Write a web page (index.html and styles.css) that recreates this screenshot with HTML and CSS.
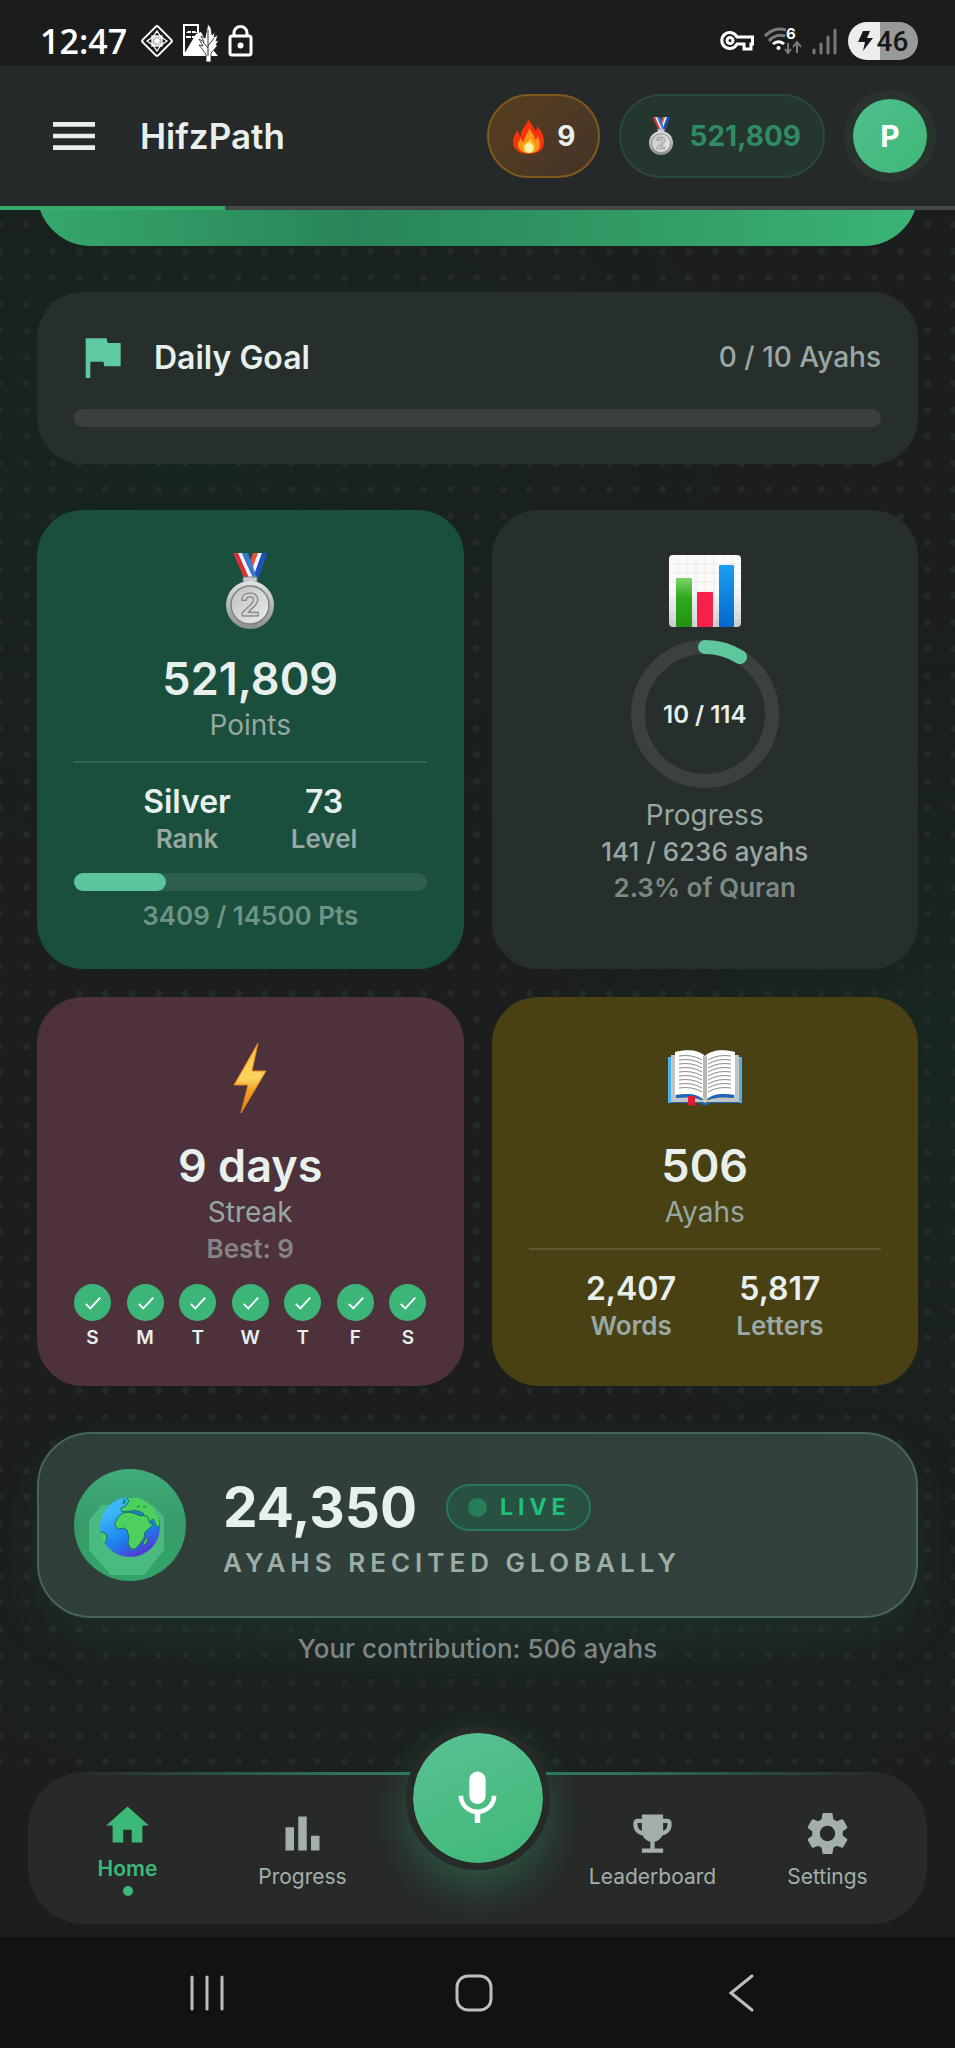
FILE: index.html
```html
<!DOCTYPE html>
<html lang="en">
<head>
  <meta charset="UTF-8">
  <meta name="viewport" content="width=device-width, initial-scale=1.0">
  <title>HifzPath</title>
  <link rel="stylesheet" href="styles.css">
</head>
<body>
  <!-- shared shapes -->
  <svg class="sprite" aria-hidden="true">
    <defs>
      <linearGradient id="silver" x1="0" y1="0" x2="0" y2="1">
        <stop offset="0" stop-color="#e2e3e3"/><stop offset="1" stop-color="#8b8d8e"/>
      </linearGradient>
      <linearGradient id="silver-in" x1="0" y1="0" x2="1" y2="1">
        <stop offset="0" stop-color="#bfc1c1"/><stop offset="1" stop-color="#ececec"/>
      </linearGradient>
      <symbol id="medal" viewBox="0 0 48 76">
        <path d="M27 0h14L32 25h-9z" fill="#3d8fc9"/>
        <path d="M27 0h5l-8 22-3-6z" fill="#e5533d"/>
        <path d="M32 0h4L27 25h-4z" fill="#f4f4f6"/>
        <path d="M36 0h5L32 25h-5z" fill="#1f4fc0"/>
        <path d="M7 0h5l11 25h-5z" fill="#dc2f3c"/>
        <path d="M12 0h4l11 25h-4z" fill="#f4f4f6"/>
        <path d="M16 0h6l9 25h-4z" fill="#3579d3"/>
        <rect x="17" y="24" width="14" height="5" rx="1" fill="#c9cccc" stroke="#7d8081"/>
        <circle cx="24" cy="52" r="24" fill="url(#silver)"/>
        <circle cx="24" cy="52" r="19" fill="url(#silver-in)" stroke="#7f8283" stroke-width="1.5"/>
        <text x="24" y="63" text-anchor="middle" class="medal-num">2</text>
      </symbol>
      <symbol id="check" viewBox="0 0 20 20">
        <path d="M2 11l5 5L18 4" fill="none" stroke="#fff" stroke-width="2"/>
      </symbol>
    </defs>
  </svg>

  <div class="status-bar">
    <span class="clock">12:47</span>
    <svg width="34" height="34" viewBox="0 0 34 34" fill="none" stroke="#fff" stroke-width="2">
      <rect x="6" y="6" width="22" height="22" rx="2" transform="rotate(45 17 17)"/>
      <path d="M17 7l4 6h-8zM17 27l4-6h-8zM7 17l6-4v8zM27 17l-6-4v8z" stroke-width="1.3"/>
      <rect x="12" y="12" width="10" height="10" stroke-width="1.3"/>
      <circle cx="17" cy="17" r="3" fill="#fff" stroke="none"/>
      <path d="M12 12l10 10M22 12L12 22" stroke-width="1"/>
    </svg>
    <svg width="36" height="38" viewBox="0 0 36 38" fill="#fff">
      <path d="M1 31V1h14v8" fill="none" stroke="#fff" stroke-width="2"/>
      <path d="M3 9l2-2h3v2zM9 9V7h3l2 2zM3 12h5v2H3zM9 12h5v2H9z"/>
      <path d="M0 32L13 10l5-2 5 9 12 15z"/>
      <path d="M25 0l3 4 1 7 3-3-1 5 4-2-2 6 3-1-3 5 2 0-5 6-2 2v9h-5v-8l-3-4-4-5 4 1-4-7 5 3-3-6 4 2z" stroke="#1a1d1c" stroke-width=".8"/>
      <path d="M25 6v26M20 18l5 6M31 14l-6 8" stroke="#1a1d1c" stroke-width=".9" fill="none"/>
    </svg>
    <svg width="26" height="34" viewBox="0 0 26 34">
      <rect x="2" y="12" width="21" height="19" rx="2" fill="none" stroke="#fff" stroke-width="3"/>
      <path d="M6 12V9a6.500 6.500 0 0113 0v3" fill="none" stroke="#fff" stroke-width="3"/>
      <circle cx="12.500" cy="21.500" r="3" fill="#fff"/>
    </svg>
    <div class="status-right">
      <svg width="34" height="22" viewBox="0 0 34 22" fill="none" stroke="#fff" stroke-width="3">
        <path d="M17 7h15.500v7H31v5h-7v-5h-7a8 8 0 110-7z"/>
        <circle cx="10" cy="10.500" r="3"/>
      </svg>
      <svg width="38" height="36" viewBox="0 0 38 36" fill="none">
        <path d="M1 13a20 20 0 0121-6M5 18a14 14 0 0116-5" stroke="#7b7d7c" stroke-width="3"/>
        <path d="M9 21a8 8 0 0111 0" stroke="#fff" stroke-width="3"/>
        <circle cx="14.500" cy="25" r="2" fill="#fff"/>
        <path d="M24 20v10m-3-4l3 4 3-4M33 30V19m-4 5l4-5 4 5" stroke="#7b7d7c" stroke-width="2"/>
        <text x="22" y="16" class="wifi-num">6</text>
      </svg>
      <svg width="26" height="28" viewBox="0 0 26 28" stroke="#777978" stroke-width="3" stroke-linecap="round">
        <path d="M2 26v-3M9 26v-9M16 26V10M23 26V3"/>
      </svg>
      <div class="battery">
        <svg width="15" height="20" viewBox="0 0 15 20"><path d="M5 0h7L9 7h6L5 20l2-9H0z" fill="#171918"/></svg>
        <span>46</span>
      </div>
    </div>
  </div>

  <header class="app-bar">
    <button class="icon-button" aria-label="Menu">
      <svg width="56" height="56" viewBox="0 0 24 24" fill="#e8f0ed"><path d="M3 18h18v-2H3v2zm0-5h18v-2H3v2zm0-7v2h18V6H3z"/></svg>
    </button>
    <h1 class="app-title">HifzPath</h1>
    <div class="pill pill-streak">
      <svg width="32" height="36" viewBox="0 0 32 36">
        <path d="M15 0c1 5 6 7 7 13 2-1 2-3 2-5 5 5 7 10 7 16 0 8-6 12-15 12S0 32 0 24c0-5 2-8 5-12 0 3 1 5 3 6C7 10 15 8 15 0z" fill="#f5330f"/>
        <path d="M16 8c1 6 6 8 6 14 2-1 2-2 2-4 3 4 3 7 3 9 0 5-4 8-11 8S5 32 5 27c0-3 1-5 3-7 0 2 1 3 3 4 0-7 6-9 5-16z" fill="#fb9419"/>
        <path d="M17 20c1 4 5 5 5 9s-3 6-6 6-6-2-6-6c0-4 6-4 7-9z" fill="#fdca3c"/>
        <ellipse cx="16" cy="30" rx="4" ry="5" fill="#fff4b0"/>
      </svg>
      <span>9</span>
    </div>
    <div class="pill pill-points">
      <svg width="24" height="38"><use href="#medal"/></svg>
      <span>521,809</span>
    </div>
    <button class="avatar">P</button>
  </header>
  <div class="page-progress"><div class="page-progress-fill" style="width: 23.6%"></div></div>

  <main class="content">
    <div class="banner"><div class="banner-card"></div></div>

    <section class="card goal">
      <div class="goal-head">
        <svg width="56" height="56" viewBox="0 0 24 24" fill="#5fc9a0"><path d="M14.400 6L14 4H5v17h2v-7h5.600l.4 2h7V6z"/></svg>
        <h2>Daily Goal</h2>
        <span>0 / 10 Ayahs</span>
      </div>
      <div class="track"></div>
    </section>

    <div class="stats">
      <section class="card stat points">
        <div class="emoji"><svg width="48" height="76"><use href="#medal"/></svg></div>
        <div class="value">521,809</div>
        <div class="label">Points</div>
        <div class="pair">
          <div><strong>Silver</strong><span>Rank</span></div>
          <div><strong>73</strong><span>Level</span></div>
        </div>
        <div class="track level"><div class="fill" style="width: 26%"></div></div>
        <div class="note">3409 / 14500 Pts</div>
      </section>

      <section class="card stat">
        <div class="emoji">
          <svg width="72" height="72" viewBox="0 0 72 72">
            <defs>
              <linearGradient id="paper" x1="0" y1="0" x2="0" y2="1"><stop offset=".5" stop-color="#fafafa"/><stop offset="1" stop-color="#c9c9cb"/></linearGradient>
              <linearGradient id="bar-g" x1="0" y1="0" x2="0" y2="1"><stop offset="0" stop-color="#7bd66b"/><stop offset=".4" stop-color="#30a81c"/><stop offset="1" stop-color="#219414"/></linearGradient>
              <linearGradient id="bar-b" x1="0" y1="0" x2="0" y2="1"><stop offset="0" stop-color="#1b9ef0"/><stop offset="1" stop-color="#0468cf"/></linearGradient>
            </defs>
            <rect width="72" height="72" rx="4" fill="url(#paper)"/>
            <path d="M0 9h72M0 18h72M0 27h72M0 36h72M0 45h72M0 54h72M0 63h72M9 0v72M18 0v72M27 0v72M36 0v72M45 0v72M54 0v72M63 0v72" stroke="#e8ebe9"/>
            <rect x="7" y="23" width="16" height="49" rx="1" fill="url(#bar-g)"/>
            <rect x="28" y="37" width="16" height="35" rx="1" fill="#f5204b"/>
            <rect x="50" y="10" width="15" height="62" rx="1" fill="url(#bar-b)"/>
          </svg>
        </div>
        <div class="ring">
          <svg viewBox="0 0 148 148">
            <circle cx="74" cy="74" r="67" fill="none" stroke="#3b413f" stroke-width="14"/>
            <path d="M74 7A67 67 0 01109 17" fill="none" stroke="#5ec79c" stroke-width="14" stroke-linecap="round"/>
          </svg>
          <span>10 / 114</span>
        </div>
        <div class="label ring-label">Progress</div>
        <div class="sub">141 / 6236 ayahs</div>
        <div class="note">2.3% of Quran</div>
      </section>

      <section class="card stat streak">
        <div class="emoji">
          <svg width="34" height="72" viewBox="0 0 34 72">
            <defs><linearGradient id="bolt" x1="0" y1="0" x2="0" y2="1"><stop offset="0" stop-color="#fcc04a"/><stop offset=".5" stop-color="#fdd45e"/><stop offset=".7" stop-color="#f49a27"/><stop offset="1" stop-color="#ef7d13"/></linearGradient></defs>
            <path d="M25 1L1 43h14L8 71l25-42H19z" fill="url(#bolt)" stroke="#e08718" stroke-width="1"/>
          </svg>
        </div>
        <div class="value">9 days</div>
        <div class="label">Streak</div>
        <div class="sub best">Best: 9</div>
        <ul class="week">
          <li><svg width="37" height="37"><use href="#check" x="10" y="10" width="18" height="18"/></svg>S</li>
          <li><svg width="37" height="37"><use href="#check" x="10" y="10" width="18" height="18"/></svg>M</li>
          <li><svg width="37" height="37"><use href="#check" x="10" y="10" width="18" height="18"/></svg>T</li>
          <li><svg width="37" height="37"><use href="#check" x="10" y="10" width="18" height="18"/></svg>W</li>
          <li><svg width="37" height="37"><use href="#check" x="10" y="10" width="18" height="18"/></svg>T</li>
          <li><svg width="37" height="37"><use href="#check" x="10" y="10" width="18" height="18"/></svg>F</li>
          <li><svg width="37" height="37"><use href="#check" x="10" y="10" width="18" height="18"/></svg>S</li>
        </ul>
      </section>

      <section class="card stat ayahs">
        <div class="emoji">
          <svg width="76" height="56" viewBox="0 0 76 56">
            <path d="M1 7h74v46H43c-2 3-8 3-10 0H1z" fill="#1d66b8"/>
            <path d="M1 7h3v46H1zM72 7h3v46h-3z" fill="#46b4f2"/>
            <path d="M4 5h5v43c11-1 22-1 28 4H4z" fill="#c4c4c4"/>
            <path d="M72 5h-5v43c-11-1-22-1-28 4h33z" fill="#c4c4c4"/>
            <path d="M8 2C20-1 32 0 38 6v45C31 43 20 43 8 45z" fill="#fff"/>
            <path d="M68 2C56-1 44 0 38 6v45c7-8 18-8 30-6z" fill="#fff"/>
            <path d="M36 5l2 2 2-2v43l-2 3-2-3z" fill="#b7b7b7"/>
            <path d="M12 6q13-2 23 4M12 10q13-2 23 4M12 14q13-2 23 4M12 18q13-2 23 4M12 22q13-2 23 4M12 26q13-2 23 4M12 30q13-2 23 4M12 34q13-2 23 4M12 38q13-2 23 4M64 6q-13-2-23 4M64 10q-13-2-23 4M64 14q-13-2-23 4M64 18q-13-2-23 4M64 22q-13-2-23 4M64 26q-13-2-23 4M64 30q-13-2-23 4M64 34q-13-2-23 4M64 38q-13-2-23 4" fill="none" stroke="#85898a" stroke-width="1"/>
            <path d="M21 46h7v10l-4-1-3 1z" fill="#e31b36"/>
            <path d="M34 50h8l-4 3z" fill="#e6d68a"/>
          </svg>
        </div>
        <div class="value">506</div>
        <div class="label">Ayahs</div>
        <div class="pair">
          <div><strong>2,407</strong><span>Words</span></div>
          <div><strong>5,817</strong><span>Letters</span></div>
        </div>
      </section>
    </div>

    <section class="card global">
      <svg class="globe" viewBox="0 0 112 112">
        <defs>
          <linearGradient id="disc" x1="0" y1="0" x2="0" y2="1"><stop offset="0" stop-color="#41ac7b"/><stop offset=".5" stop-color="#369b6a"/><stop offset="1" stop-color="#33a469"/></linearGradient>
          <linearGradient id="sea" x1=".2" y1="0" x2=".7" y2="1"><stop offset=".2" stop-color="#3cb6fc"/><stop offset=".65" stop-color="#1a80ec"/><stop offset="1" stop-color="#5b32cf"/></linearGradient>
          <clipPath id="disc-clip"><circle cx="56" cy="56" r="56"/></clipPath>
          <clipPath id="earth-clip"><circle cx="56" cy="58" r="30"/></clipPath>
        </defs>
        <circle cx="56" cy="56" r="56" fill="url(#disc)"/>
        <path d="M15 52l12-16h52l11 12v33l-20 25H37L15 81z" fill="#49ba80" clip-path="url(#disc-clip)"/>
        <circle cx="56" cy="58" r="30" fill="url(#sea)"/>
        <g clip-path="url(#earth-clip)" fill="#4dd05e" stroke="#1c6f66" stroke-width="1">
          <path d="M47 39l5-2 3-5-3-4h14l12 7 7 12 1 10-3 1-4-8-4 3-4-6-6-1-6-3-5-1-6 1z"/>
          <path d="M41 54l3-6 5-4 8-1 8 3 8 1 3 7 3 1-3 4-5 4-1 6-5 7-4 4-4 0-3-5 1-7-2-7-3-2-5 1-4-3z"/>
          <path d="M25 62l7 3 1 5-3 6-6-7zM73 68l1 3-3 5-2-2z"/>
          <path d="M56 43l3-2 4 1 4 1 3 2-3 2-5-2zM63 38l3-1M69 38h3" fill="#1f7fd0"/>
          <path d="M50 30l2 3-3 2z"/>
        </g>
      </svg>
      <div class="global-text">
        <div class="global-row">
          <span class="global-count">24,350</span>
          <span class="live"><i></i>LIVE</span>
        </div>
        <div class="global-label">AYAHS RECITED GLOBALLY</div>
      </div>
    </section>
    <p class="contribution">Your contribution: 506 ayahs</p>
  </main>

  <nav class="tab-bar">
    <a class="tab active" href="#home">
      <svg viewBox="0 0 24 24"><path d="M10 20v-6h4v6h5v-8h3L12 3 2 12h3v8z"/></svg>
      Home
    </a>
    <a class="tab" href="#progress">
      <svg viewBox="0 0 24 24"><path d="M4 9h4v11H4zM16 13h4v7h-4zM10 4h4v16h-4z"/></svg>
      Progress
    </a>
    <button class="fab" aria-label="Recite">
      <svg width="65" height="65" viewBox="0 0 24 24" fill="#fff"><path d="M12 14c1.660 0 2.990-1.340 2.990-3L15 5c0-1.660-1.340-3-3-3S9 3.340 9 5v6c0 1.660 1.340 3 3 3zm5.300-3c0 3-2.540 5.100-5.300 5.100S6.700 14 6.700 11H5c0 3.410 2.720 6.230 6 6.720V21h2v-3.280c3.280-.48 6-3.300 6-6.720h-1.700z"/></svg>
    </button>
    <a class="tab" href="#leaderboard">
      <svg viewBox="0 0 24 24"><path d="M19 5h-2V3H7v2H5c-1.100 0-2 .9-2 2v1c0 2.550 1.920 4.630 4.390 4.940.63 1.500 1.980 2.630 3.610 2.960V19H7v2h10v-2h-4v-3.100c1.630-.33 2.980-1.460 3.610-2.960C19.080 12.630 21 10.550 21 8V7c0-1.100-.9-2-2-2zM5 8V7h2v3.820C5.840 10.400 5 9.300 5 8zm14 0c0 1.300-.84 2.400-2 2.820V7h2v1z"/></svg>
      Leaderboard
    </a>
    <a class="tab" href="#settings">
      <svg viewBox="0 0 24 24"><path d="M19.140 12.940c.04-.3.060-.61.060-.94 0-.32-.02-.64-.07-.94l2.030-1.580c.18-.14.23-.41.12-.61l-1.920-3.320c-.12-.22-.37-.29-.59-.22l-2.390.96c-.5-.38-1.030-.7-1.620-.94l-.36-2.540c-.04-.24-.24-.41-.48-.41h-3.840c-.24 0-.43.17-.47.41l-.36 2.540c-.59.24-1.130.57-1.620.94l-2.390-.96c-.22-.08-.47 0-.59.22L2.740 8.870c-.12.21-.08.47.12.61l2.030 1.580c-.05.3-.09.63-.09.94s.02.64.07.94l-2.030 1.580c-.18.14-.23.41-.12.61l1.920 3.320c.12.22.37.29.59.22l2.390-.96c.5.38 1.030.7 1.620.94l.36 2.540c.05.24.24.41.48.41h3.840c.24 0 .44-.17.47-.41l.36-2.540c.59-.24 1.130-.56 1.620-.94l2.390.96c.22.08.47 0 .59-.22l1.920-3.320c.12-.22.07-.47-.12-.61l-2.010-1.580zM12 15.600c-1.980 0-3.600-1.620-3.600-3.600s1.620-3.600 3.600-3.600 3.600 1.620 3.600 3.600-1.620 3.600-3.600 3.600z"/></svg>
      Settings
    </a>
  </nav>

  <div class="system-nav">
    <button aria-label="Recent apps"><svg width="38" height="40" viewBox="0 0 38 40"><path d="M4 4v32M19 4v32M34 4v32"/></svg></button>
    <button aria-label="Home screen"><svg width="40" height="40" viewBox="0 0 40 40"><rect x="3" y="3" width="34" height="34" rx="11"/></svg></button>
    <button aria-label="Back"><svg width="40" height="40" viewBox="0 0 40 40"><path d="M31 3L10 20l21 17"/></svg></button>
  </div>
</body>
</html>
```
FILE: styles.css
```css
* {
  box-sizing: border-box;
}

body {
  margin: 0;
  min-height: 100vh;
  display: flex;
  flex-direction: column;
  font-family: Inter, "Noto Sans", sans-serif;
  color: #e8f0ed;
  background-color: #1b1e1d;
  background-image:
    radial-gradient(ellipse 560px 460px at 20% 430px, rgba(10, 56, 32, 0.3), transparent),
    radial-gradient(ellipse 420px 460px at 100% 1060px, rgba(14, 60, 42, 0.28), transparent),
    radial-gradient(ellipse 600px 220px at 50% 1620px, rgba(30, 70, 55, 0.2), transparent);
}

h1, h2, p, ul {
  margin: 0;
  padding: 0;
}

button {
  border: none;
  padding: 0;
  background: none;
  color: inherit;
  font-family: inherit;
  cursor: pointer;
}

svg {
  display: block;
  flex-shrink: 0;
}

.sprite {
  position: absolute;
  width: 0;
  height: 0;
}

.medal-num {
  font-size: 31px;
  font-weight: 700;
  fill: #d2d4d4;
  stroke: #777a7b;
  stroke-width: 1px;
}

/* phone status bar */
.status-bar {
  height: 66px;
  padding: 16px 37px 0 40px;
  display: flex;
  align-items: flex-start;
  gap: 9px;
  background: #1a1d1c;
}

.status-bar > svg {
  margin-top: 8px;
}

.clock {
  font-family: "Open Sans", sans-serif;
  font-size: 34px;
  line-height: 50px;
  font-weight: 600;
  color: #fff;
  margin-right: 4px;
}

.status-right {
  margin-left: auto;
  margin-top: 6px;
  display: flex;
  align-items: center;
  gap: 10px;
}

.wifi-num {
  font-size: 15px;
  font-weight: 700;
  fill: #fff;
}

.battery {
  display: flex;
  align-items: center;
  justify-content: center;
  gap: 4px;
  width: 70px;
  height: 38px;
  border-radius: 19px;
  background: linear-gradient(90deg, #eceeed 46%, #989a99 46%);
  color: #171918;
  font-family: Roboto, sans-serif;
  font-size: 28px;
  font-weight: 500;
}

/* app bar */
.app-bar {
  display: flex;
  align-items: center;
  padding: 28px 28px 28px 46px;
  background: #262929;
}

.app-title {
  margin: 0 auto 0 38px;
  font-size: 35px;
  font-weight: 600;
}

.pill {
  display: flex;
  align-items: center;
  gap: 12px;
  height: 84px;
  padding: 0 22px 0 24px;
  border: 2px solid;
  border-radius: 42px;
  font-size: 28px;
  font-weight: 700;
}

.pill-streak {
  margin-right: 19px;
  background: linear-gradient(135deg, #563f1d, #463329);
  border-color: #80591f;
}

.pill-points {
  gap: 17px;
  margin-right: 28px;
  padding-left: 28px;
  background: #25362f;
  border-color: #264a3c;
  color: #2f8c62;
}

.avatar {
  width: 74px;
  height: 74px;
  border-radius: 50%;
  background: linear-gradient(135deg, #50bf8e, #3fb878);
  box-shadow: 0 0 0 9px #2a322e;
  color: #fff;
  font-size: 30px;
  font-weight: 700;
}

.page-progress {
  height: 4px;
  background: #434745;
}

.page-progress-fill {
  height: 100%;
  background: #35ad6d;
}

/* page content over the dotted pattern */
.content {
  flex: 1;
  display: flex;
  flex-direction: column;
  gap: 46px;
  padding: 0 37px 106px;
  background-image:
    radial-gradient(circle, #232a27 3px, transparent 4px),
    radial-gradient(circle, #232a27 3px, transparent 4px),
    radial-gradient(circle, #232a27 3px, transparent 4px),
    radial-gradient(circle, #232a27 3px, transparent 4px);
  background-size: 53px 53px;
  background-position: 26px 41px, 53px 41px, 26px 15px, 53px 15px;
}

.banner {
  display: flex;
  align-items: flex-end;
  height: 36px;
  overflow: hidden;
}

.banner-card {
  flex: 1;
  height: 120px;
  border-radius: 54px;
  background: linear-gradient(90deg, #35a76c, #298559 36%, #2f9562 60%, #3bb475);
}

.card {
  padding: 37px;
  border-radius: 46px;
  background: #272f2c;
}

.goal-head {
  display: flex;
  align-items: center;
  gap: 24px;
  margin-bottom: 24px;
}

.goal-head h2 {
  font-size: 32px;
  font-weight: 600;
}

.goal-head span {
  margin-left: auto;
  font-size: 28px;
  font-weight: 500;
  color: #9ba7a2;
}

.track {
  width: 100%;
  height: 18px;
  border-radius: 9px;
  background: #3b403e;
}

.fill {
  height: 100%;
  border-radius: 9px;
  background: #5cc59b;
}

.stats {
  display: grid;
  grid-template-columns: 1fr 1fr;
  gap: 28px;
}

.stat {
  display: flex;
  flex-direction: column;
  align-items: center;
  padding: 39px 37px 36px;
}

.points {
  background: #1a4e3d;
}

.streak {
  background: #4e323b;
}

.ayahs {
  background: #494114;
}

.emoji {
  height: 84px;
  display: flex;
  align-items: center;
}

.value {
  margin-top: 18px;
  font-size: 45px;
  line-height: 56px;
  font-weight: 600;
}

.label {
  font-size: 28px;
  line-height: 36px;
  color: #97a7a1;
}

.sub {
  font-size: 26px;
  line-height: 38px;
  font-weight: 500;
  color: #9ba7a2;
}

.best {
  font-weight: 600;
  color: #848584;
}

.note {
  font-size: 26px;
  line-height: 34px;
  font-weight: 600;
  color: #7c8884;
}

.points .note {
  color: #6d9485;
}

.pair {
  align-self: stretch;
  display: flex;
  justify-content: center;
  gap: 60px;
  margin-top: 18px;
  padding-top: 20px;
  border-top: 2px solid rgba(255, 255, 255, 0.12);
  text-align: center;
}

.pair strong {
  display: block;
  font-size: 32px;
  line-height: 38px;
  font-weight: 600;
}

.pair span {
  font-size: 26px;
  line-height: 36px;
  display: block;
  font-weight: 600;
  color: #9aa9a3;
}

.level {
  margin: 16px 0 8px;
  background: #2e5f4e;
}

.ring {
  position: relative;
  width: 148px;
  height: 148px;
  margin-top: 7px;
  display: grid;
  place-items: center;
  font-size: 24px;
  font-weight: 600;
}

.ring svg {
  position: absolute;
  inset: 0;
}

.ring-label {
  margin-top: 9px;
}

.week {
  align-self: stretch;
  display: flex;
  justify-content: space-between;
  margin-top: 16px;
  list-style: none;
  text-align: center;
  font-size: 19px;
  line-height: 24px;
  font-weight: 600;
}

.week svg {
  margin-bottom: 5px;
  border-radius: 50%;
  background: #3bb678;
}

/* global counter */
.global {
  display: flex;
  gap: 37px;
  padding: 35px;
  border: 2px solid #46665a;
  border-radius: 54px;
  background: linear-gradient(90deg, #2f3e38, #32413c);
  box-shadow: 0 20px 50px rgba(50, 120, 95, 0.14);
}

.globe {
  width: 112px;
  height: 112px;
}

.global-row {
  display: flex;
  align-items: center;
  gap: 29px;
  height: 76px;
}

.global-count {
  font-size: 55px;
  font-weight: 700;
}

.live {
  display: flex;
  align-items: center;
  gap: 13px;
  height: 47px;
  padding: 0 18px 0 20px;
  border: 2px solid #267a58;
  border-radius: 24px;
  background: #285142;
  color: #1fc07a;
  font-size: 23px;
  font-weight: 700;
  letter-spacing: 5px;
}

.live i {
  width: 19px;
  height: 19px;
  border-radius: 50%;
  background: #277d57;
}

.global-label {
  font-size: 26px;
  line-height: 36px;
  font-weight: 600;
  letter-spacing: 5px;
  color: #9dada6;
}

.contribution {
  margin-top: -32px;
  text-align: center;
  font-size: 26px;
  line-height: 34px;
  font-weight: 500;
  color: #7f8684;
}

/* bottom tabs */
.tab-bar {
  display: grid;
  grid-template-columns: repeat(5, 1fr);
  grid-template-rows: 100%;
  align-items: center;
  height: 152px;
  margin: 0 28px 13px;
  padding: 0 12px;
  border-radius: 56px;
  background:
    linear-gradient(90deg, transparent 5%, #2f7459 35%, #2f7459 65%, transparent 95%) top / 100% 3px no-repeat,
    #272a29;
}

.tab {
  display: flex;
  flex-direction: column;
  align-items: center;
  font-size: 21px;
  line-height: 24px;
  color: #a3afab;
  text-decoration: none;
}

.tab svg {
  width: 51px;
  height: 51px;
  margin-bottom: 6px;
  fill: currentColor;
}

.tab.active {
  color: #3cb879;
  font-weight: 600;
}

.tab.active::after {
  content: "";
  width: 10px;
  height: 10px;
  margin-top: 5px;
  border-radius: 50%;
  background: currentColor;
}

.fab {
  justify-self: center;
  display: grid;
  place-items: center;
  width: 144px;
  height: 144px;
  margin-top: -100px;
  border: 7px solid #272b28;
  border-radius: 50%;
  background: linear-gradient(160deg, #5ac194, #3fb878) padding-box;
  box-shadow: 0 18px 38px rgba(60, 184, 121, 0.3);
}

.system-nav {
  display: grid;
  grid-template-columns: repeat(3, 1fr);
  align-items: center;
  height: 112px;
  padding: 0 81px 0 73px;
  background: #111211;
}

.system-nav button {
  display: grid;
  place-items: center;
}

.system-nav svg {
  fill: none;
  stroke: #bdbfbe;
  stroke-width: 3px;
  stroke-linecap: round;
}
```
